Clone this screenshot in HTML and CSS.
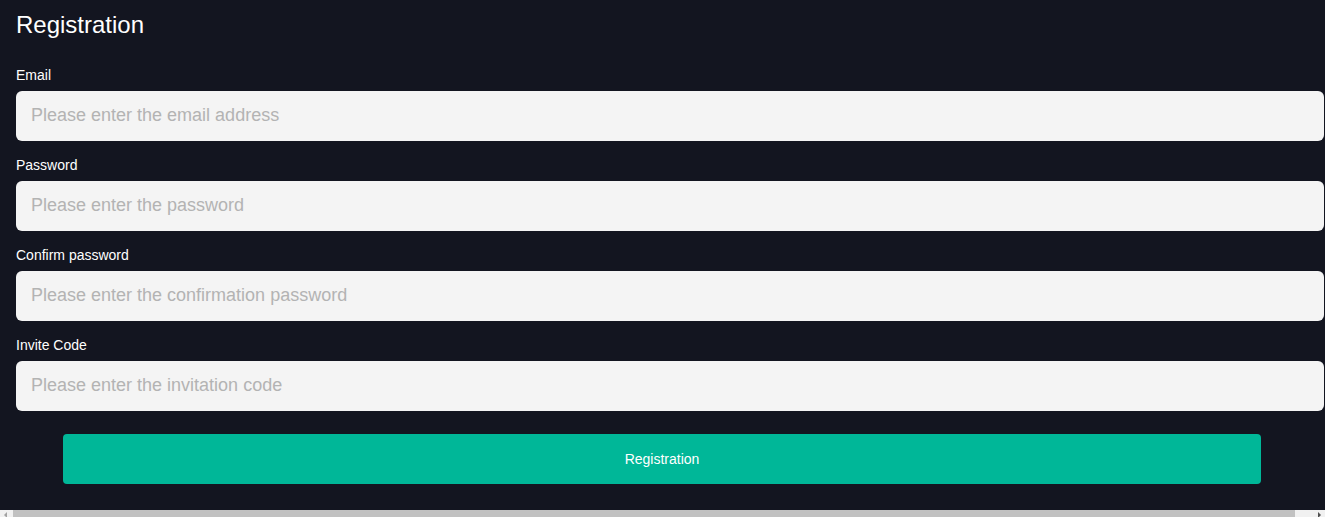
FILE: index.html
```html
<!DOCTYPE html>
<html lang="en">
<head>
<meta charset="utf-8">
<title>Registration</title>
<link rel="stylesheet" href="styles.css">
</head>
<body>
<main class="page">
  <h2 class="title">Registration</h2>
  <form class="form">
    <div class="field">
      <label class="label" for="email">Email</label>
      <input class="input" id="email" type="text" placeholder="Please enter the email address">
    </div>
    <div class="field">
      <label class="label" for="pwd">Password</label>
      <input class="input" id="pwd" type="password" placeholder="Please enter the password">
    </div>
    <div class="field">
      <label class="label" for="pwd2">Confirm password</label>
      <input class="input" id="pwd2" type="password" placeholder="Please enter the confirmation password">
    </div>
    <div class="field">
      <label class="label" for="code">Invite Code</label>
      <input class="input" id="code" type="text" placeholder="Please enter the invitation code">
    </div>
    <button class="submit" type="button">Registration</button>
  </form>
</main>
<div class="hscroll">
  <span class="arrow arrow-left"></span>
  <span class="thumb"></span>
  <span class="arrow arrow-right"></span>
</div>
</body>
</html>
```

FILE: styles.css
```css
html, body {
  margin: 0;
  padding: 0;
  background: #131520;
  overflow: hidden;
}
body {
  font-family: "Liberation Sans", Arial, sans-serif;
  color: #ffffff;
  height: 517px;
}
.page {
  padding: 9px 16px 0 16px;
}
.title {
  margin: 0;
  font-size: 24px;
  line-height: 32px;
  font-weight: normal;
}
.form {
  margin-top: 24px;
  display: flex;
  flex-direction: column;
  gap: 14px;
}
.field {
  display: flex;
  flex-direction: column;
  align-items: flex-start;
}
.label {
  font-size: 14px;
  line-height: 20px;
  margin-bottom: 6px;
}
.input {
  box-sizing: content-box;
  width: 100%;
  height: 48px;
  padding: 0 0 2px 15px;
  margin: 0;
  border: none;
  border-radius: 6px;
  background: #f4f4f4;
  font-family: "Liberation Sans", Arial, sans-serif;
  font-size: 18px;
  color: #333;
  outline: none;
}
.input::placeholder {
  color: #b3b3b3;
}
.submit {
  margin: 9px 48px 0 47px;
  height: 50px;
  padding: 0;
  border: none;
  border-radius: 4px;
  background: #00b798;
  color: #ffffff;
  font-family: "Liberation Sans", Arial, sans-serif;
  font-size: 14px;
}
.hscroll {
  position: fixed;
  left: 0;
  right: 0;
  bottom: 0;
  height: 7px;
  background: #f1f1f1;
  display: flex;
  align-items: stretch;
}
.thumb {
  display: block;
  width: 1282px;
  background: #c1c1c1;
}
.arrow {
  display: block;
  width: 13px;
  position: relative;
}
.arrow-right {
  margin-left: auto;
  width: 30px;
}
.arrow-left::after,
.arrow-right::after {
  content: "";
  position: absolute;
  top: 2px;
  width: 0;
  height: 0;
  border-top: 3px solid transparent;
  border-bottom: 3px solid transparent;
}
.arrow-left::after {
  left: 4px;
  border-right: 3px solid #a3a3a3;
}
.arrow-right::after {
  right: 4px;
  border-left: 3px solid #505050;
}
```
